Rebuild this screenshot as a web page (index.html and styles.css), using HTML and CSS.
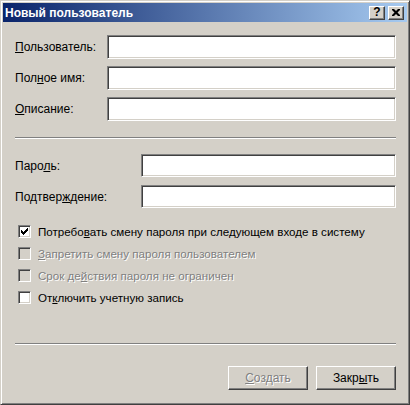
FILE: index.html
```html
<!DOCTYPE html>
<html lang="ru">

<head>
    <meta charset="UTF-8">
    <meta name="viewport" content="width=device-width, initial-scale=1.0">
    <title>Новый пользователь</title>
    <link rel="stylesheet" href="styles.css">
</head>

<body>
    <div class="window">
        <div class="titlebar">
            <span class="title">Новый пользователь</span>
            <div class="title-buttons">
                <span class="tb-btn tb-help">?</span>
                <span class="tb-btn">
                    <svg width="8" height="7" viewBox="0 0 8 7">
                        <path d="M0 0h2l2 2 2-2h2v1l-2.5 2.5L8 6v1H6L4 5 2 7H0V6l2.5-2.5L0 1z" fill="#000" />
                    </svg>
                </span>
            </div>
        </div>

        <div class="content">
            <div class="fields fields-user">
                <label><u>П</u>ользователь:</label>
                <input type="text">
                <label>Пол<u>н</u>ое имя:</label>
                <input type="text">
                <label><u>О</u>писание:</label>
                <input type="text">
            </div>

            <div class="separator"></div>

            <div class="fields fields-pass">
                <label>Паро<u>л</u>ь:</label>
                <input type="password">
                <label>Подтвер<u>ж</u>дение:</label>
                <input type="password">
            </div>

            <div class="checks">
                <div class="check-row">
                    <span class="checkbox">
                        <svg width="7" height="7" viewBox="0 0 7 7">
                            <path d="M0 2h1v1h1v1h1V3h1V2h1V1h1V0h1v3H6v1H5v1H4v1H3v1H2V6H1V5H0z" fill="#000" />
                        </svg>
                    </span>
                    <span>Потребо<u>в</u>ать смену пароля при следующем входе в систему</span>
                </div>
                <div class="check-row disabled">
                    <span class="checkbox"></span>
                    <span><u>З</u>апретить смену пароля пользователем</span>
                </div>
                <div class="check-row disabled">
                    <span class="checkbox"></span>
                    <span>Срок де<u>й</u>ствия пароля не ограничен</span>
                </div>
                <div class="check-row">
                    <span class="checkbox"></span>
                    <span>От<u>к</u>лючить учетную запись</span>
                </div>
            </div>

            <div class="separator separator-bottom"></div>

            <div class="buttons">
                <button class="btn" disabled><u>С</u>оздать</button>
                <button class="btn">Закр<u>ы</u>ть</button>
            </div>
        </div>
    </div>
</body>

</html>
```

FILE: styles.css
```css
/* классическое окно диалога */
body {
    margin: 0;
    font-family: 'Liberation Sans', Arial, sans-serif;
    font-size: 12px;
    background-color: #d4d0c8;
}

.window {
    box-sizing: border-box;
    width: 410px;
    height: 405px;
    padding: 2px;
    background-color: #d4d0c8;
    border: 1px solid;
    border-color: #d4d0c8 #404040 #404040 #d4d0c8;
    box-shadow: inset 1px 1px #fff, inset -1px -1px #808080;
}

.titlebar {
    display: flex;
    align-items: center;
    justify-content: space-between;
    height: 19px;
    padding: 0 3px 0 2px;
    background: linear-gradient(to right, #0a246a, #a6caf0);
}

.title {
    color: #fff;
    font-weight: bold;
    font-size: 12px;
}

.title-buttons {
    display: flex;
    gap: 3px;
}

.tb-btn {
    box-sizing: border-box;
    display: flex;
    align-items: center;
    justify-content: center;
    width: 16px;
    height: 14px;
    background-color: #d4d0c8;
    border: 1px solid;
    border-color: #fff #404040 #404040 #fff;
    box-shadow: inset -1px -1px #808080;
}

.tb-help {
    font-weight: bold;
    font-size: 12px;
    line-height: 1;
    padding-bottom: 1px;
}

.content {
    padding: 13px 11px 0 12px;
}

.fields {
    display: grid;
    align-items: center;
}

.fields label {
    white-space: nowrap;
}

.fields-user {
    grid-template-columns: 92px 1fr;
    grid-auto-rows: 24px;
    row-gap: 7px;
}

.fields-pass {
    grid-template-columns: 126px 1fr;
    grid-auto-rows: 23px;
    row-gap: 8px;
}

.fields input {
    box-sizing: border-box;
    height: 100%;
    width: 100%;
    margin: 0;
    background-color: #fff;
    border: 1px solid;
    border-color: #808080 #fff #fff #808080;
    box-shadow: inset 1px 1px #404040, inset -1px -1px #d4d0c8;
    outline: none;
}

.separator {
    height: 0;
    margin: 16px 0 15px;
    border-top: 1px solid #808080;
    border-bottom: 1px solid #fff;
}

.checks {
    margin-top: 12px;
}

.check-row {
    display: flex;
    align-items: center;
    gap: 7px;
    height: 22px;
    padding-left: 3px;
    font-size: 11.6px;
    white-space: nowrap;
}

.checkbox {
    box-sizing: border-box;
    display: flex;
    align-items: center;
    justify-content: center;
    flex: none;
    width: 13px;
    height: 13px;
    background-color: #fff;
    border: 1px solid;
    border-color: #808080 #fff #fff #808080;
    box-shadow: inset 1px 1px #404040, inset -1px -1px #d4d0c8;
}

.disabled {
    color: #808080;
    text-shadow: 1px 1px 0 #fff;
}

.disabled .checkbox {
    background-color: #d4d0c8;
}

.separator-bottom {
    margin: 35px 0 21px;
}

.buttons {
    display: flex;
    justify-content: flex-end;
    gap: 8px;
}

.btn {
    box-sizing: border-box;
    width: 80px;
    height: 24px;
    padding: 0;
    font-family: 'Liberation Sans', Arial, sans-serif;
    font-size: 12px;
    color: #000;
    background-color: #d4d0c8;
    border: 1px solid;
    border-color: #fff #404040 #404040 #fff;
    box-shadow: inset -1px -1px #808080;
}

.btn:disabled {
    color: #808080;
    text-shadow: 1px 1px 0 #fff;
}
```
